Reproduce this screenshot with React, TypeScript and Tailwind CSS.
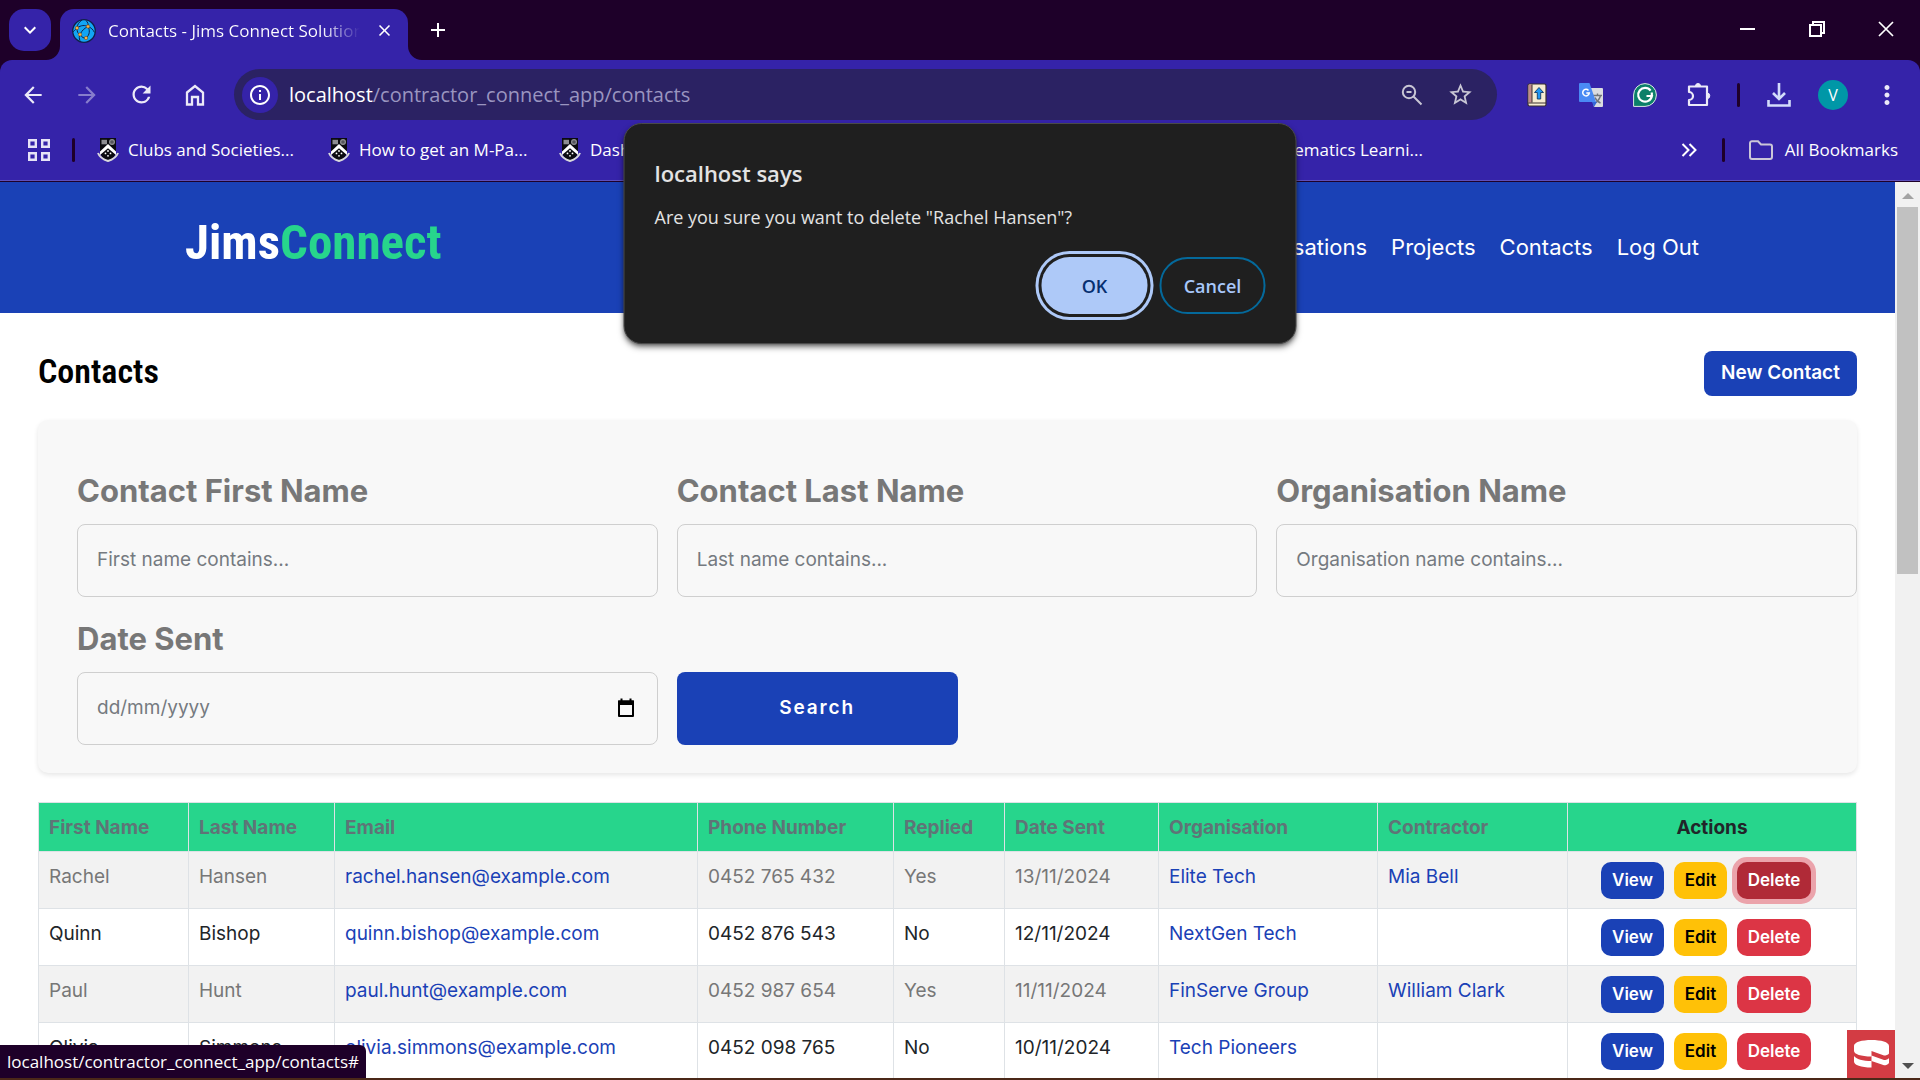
import type { ReactNode } from "react";
import {
  MdAdd,
  MdArrowBack,
  MdArrowForward,
  MdClose,
  MdExpandMore,
  MdInfoOutline,
  MdMoreVert,
  MdRefresh,
  MdStarBorder,
} from "react-icons/md";

type Contact = {
  first: string;
  last: string;
  email: string;
  phone: string;
  replied: string;
  date: string;
  organisation: string;
  contractor: string;
};

const contacts: Contact[] = [
  { first: "Rachel", last: "Hansen", email: "rachel.hansen@example.com", phone: "0452 765 432", replied: "Yes", date: "13/11/2024", organisation: "Elite Tech", contractor: "Mia Bell" },
  { first: "Quinn", last: "Bishop", email: "quinn.bishop@example.com", phone: "0452 876 543", replied: "No", date: "12/11/2024", organisation: "NextGen Tech", contractor: "" },
  { first: "Paul", last: "Hunt", email: "paul.hunt@example.com", phone: "0452 987 654", replied: "Yes", date: "11/11/2024", organisation: "FinServe Group", contractor: "William Clark" },
  { first: "Olivia", last: "Simmons", email: "olivia.simmons@example.com", phone: "0452 098 765", replied: "No", date: "10/11/2024", organisation: "Tech Pioneers", contractor: "" },
];

const columns = [
  { label: "First Name", width: "w-[150px]" },
  { label: "Last Name", width: "w-[146px]" },
  { label: "Email", width: "w-[363px]" },
  { label: "Phone Number", width: "w-[196px]" },
  { label: "Replied", width: "w-[111px]" },
  { label: "Date Sent", width: "w-[154px]" },
  { label: "Organisation", width: "w-[219px]" },
  { label: "Contractor", width: "w-[190px]" },
];

function GlobeIcon() {
  return (
    <svg viewBox="0 0 24 24" className="size-6 shrink-0" fill="none" stroke="#10204a" strokeWidth="1">
      <circle cx="12" cy="12" r="11.3" fill="#12a5f4" strokeWidth="1.3" />
      <path d="M5 9C9 6 13 6 16 7.500c3 1 5 3 6.500 6M5 9c-2 2-3 3-4 4M5 9c0 4 1 6 3 6.500M8 15.500C10 11 13 9 16 7.500M8 15.500c2 3 4 4 6 3.500M14 19c4-3 4-8 2-11.500M10 1c-3 2-5 5-5 8M14 1.500c2 2 2.500 4 2 6M8 15.500c-1 2-1 4 0 6" />
      <g fill="#fbb040" stroke="#5b4220" strokeWidth=".5">
        <circle cx="5" cy="9" r="1.700" />
        <circle cx="16" cy="7.500" r="1.700" />
        <circle cx="8" cy="15.500" r="1.700" />
        <circle cx="14" cy="19" r="1.700" />
      </g>
    </svg>
  );
}

function CrestIcon() {
  return (
    <svg viewBox="0 0 22 24" className="h-6 w-[22px] shrink-0">
      <path d="M3 0h16v13c0 5-4 8-8 10.500C7 21 3 18 3 13z" fill="#0b0b10" />
      <rect x="4.500" y="1.800" width="5.500" height="4.500" fill="#8d8d92" />
      <circle cx="15" cy="4" r="2.400" fill="#55555c" stroke="#8d8d92" strokeWidth="1.200" />
      <path d="M3 13.500 11 6l8 7.500v3.500L11 10.200l-8 6.800z" fill="#fff" />
      <g fill="#fff">
        <circle cx="11" cy="13" r=".9" />
        <circle cx="8.500" cy="15.400" r=".9" />
        <circle cx="13.500" cy="15.400" r=".9" />
        <circle cx="11" cy="17.800" r=".9" />
      </g>
      <path d="M1 15c1.500 4 5 6.500 10 8 5-1.500 8.500-4 10-8" fill="none" stroke="#d8d8dc" strokeWidth="2" />
    </svg>
  );
}

function BookIcon() {
  return (
    <svg viewBox="0 0 20 24" className="h-6 w-5">
      <rect x="1" y="1" width="18" height="22" rx="1.500" fill="#f6ecd2" stroke="#3a3030" strokeWidth="1.200" />
      <rect x="1.600" y="1.600" width="3.400" height="18" fill="#c08a8a" />
      <path d="M5 1.500v18M1.500 20H19" stroke="#3a3030" strokeWidth="1" />
      <path d="M12 4.500 7.500 9.500h2.800v6.500h3.400V9.500h2.800z" fill="#2196f3" stroke="#123a66" strokeWidth=".9" />
    </svg>
  );
}

function TranslateIcon() {
  return (
    <svg viewBox="0 0 24 24" className="size-6">
      <path d="M10 5h13a1 1 0 0 1 1 1v17a1 1 0 0 1-1 1h-8z" fill="#dadce0" />
      <path d="M14 12.500h9M18.500 10.500v2M21.500 12.500c-.8 3.500-3 6-5.500 7.500M16 14.500c1 2.500 3 4.500 5.500 5.500" stroke="#70757a" strokeWidth="1.400" fill="none" />
      <path d="m13 19 5 0-3 5z" fill="#3367d6" />
      <path d="M1 0h9.500L17 19H1a1 1 0 0 1-1-1V1a1 1 0 0 1 1-1z" fill="#4a8af4" />
      <path d="M9.500 7.400A3.300 3.300 0 1 0 10.300 10H7.300" fill="none" stroke="#fff" strokeWidth="1.500" />
    </svg>
  );
}

function GrammarIcon() {
  return (
    <svg viewBox="0 0 24 24" className="size-6">
      <path d="M12 .6a11.400 11.400 0 1 1 0 22.800H.6V12A11.400 11.400 0 0 1 12 .6z" fill="#0b8069" stroke="#dfe8e6" strokeWidth="1" />
      <path d="M17.600 7.600A6.900 6.900 0 1 0 18.900 13h-5.400M18.800 9.500V13" fill="none" stroke="#fff" strokeWidth="2.200" />
    </svg>
  );
}

function PuzzleIcon() {
  return (
    <svg viewBox="0 0 26 26" className="size-[26px]" fill="none" stroke="#eceaf8" strokeWidth="2.200" strokeLinejoin="round">
      <path d="M3 4.500h18v18.500H3v-5a3.800 3.800 0 0 0 0-8z" />
      <path d="M9.500 4a2.500 2.500 0 0 1 5 0zM21 11a2.800 2.800 0 0 1 0 5.600z" fill="#eceaf8" strokeWidth="1" />
    </svg>
  );
}

function CakeLogo() {
  return (
    <svg viewBox="0 0 48 48" className="size-12">
      <rect width="48" height="48" fill="#d33c44" />
      <g fill="#fff">
        <path d="M7 16c0-4 8-6 17.500-6S42 12 42 16v7.500c-1 1.500-3 2-5 2L24.500 21v5.500C14 26.500 7 24 7 21z" />
        <path d="M7 26c2 3 9 5 17.500 5v6.500C14 37.500 7 35 7 31.500z" />
        <path d="M24.500 25.500 37 30c2 0 4-.5 5-2v5c-1 1.500-3 2.300-5 2.300L24.500 31z" />
      </g>
    </svg>
  );
}

function ToolButton({ label, children }: { label: string; children: ReactNode }) {
  return (
    <button aria-label={label} className="flex h-11 w-[54px] shrink-0 items-center justify-center text-[#eceaf8]">
      {children}
    </button>
  );
}

function Divider() {
  return <span className="h-6 w-[3px] shrink-0 rounded-full bg-[#1e0029]" />;
}

function Bookmark({ label }: { label: string }) {
  return (
    <a href="#" className="flex w-[231px] shrink-0 items-center gap-[9px] whitespace-nowrap">
      <CrestIcon />
      {label}
    </a>
  );
}

function TabStrip() {
  return (
    <div className="flex h-[60px] shrink-0 items-start bg-[#1e0029] pt-[9px] text-white">
      <button aria-label="Search tabs" className="ml-[9px] flex size-[42px] items-center justify-center rounded-[15px] bg-[#3523a9]">
        <MdExpandMore className="size-6" />
      </button>
      <div className="relative ml-[9px] flex h-[51px] w-[348px] items-center rounded-t-[14px] bg-[#3523a9] pr-3 pb-2 pl-3">
        <GlobeIcon />
        <span className="ml-3 flex-1 overflow-hidden bg-linear-to-r from-white from-85% to-transparent bg-clip-text pt-[1px] text-[17px] whitespace-nowrap text-transparent">
          Contacts - Jims Connect Solutions
        </span>
        <button aria-label="Close tab" className="ml-3 flex size-6 items-center justify-center">
          <MdClose className="size-[19px]" />
        </button>
        <svg viewBox="0 0 14 14" className="absolute bottom-0 -left-[14px] size-[14px]" fill="#3523a9">
          <path d="M14 0v14H0A14 14 0 0 0 14 0z" />
        </svg>
        <svg viewBox="0 0 14 14" className="absolute -right-[14px] bottom-0 size-[14px]" fill="#3523a9">
          <path d="M0 0v14h14A14 14 0 0 1 0 0z" />
        </svg>
      </div>
      <button aria-label="New tab" className="ml-[9px] flex size-[42px] items-center justify-center">
        <MdAdd className="size-6" />
      </button>
      <div className="ml-auto flex">
        <button aria-label="Minimise" className="flex h-10 w-[69px] items-center justify-center">
          <span className="h-[2px] w-[15px] bg-white" />
        </button>
        <button aria-label="Restore" className="flex h-10 w-[69px] items-center justify-center">
          <svg viewBox="0 0 16 16" className="size-4" fill="none" stroke="#fff" strokeWidth="2">
            <path d="M1 4h11v11H1zM4 4V1h11v11h-3" />
          </svg>
        </button>
        <button aria-label="Close window" className="flex h-10 w-[69px] items-center justify-center">
          <svg viewBox="0 0 16 16" className="size-4" stroke="#fff" strokeWidth="1.700">
            <path d="m1 1 14 14M15 1 1 15" />
          </svg>
        </button>
      </div>
    </div>
  );
}

function Toolbar() {
  return (
    <div className="flex h-[69px] shrink-0 items-center px-[6px]">
      <ToolButton label="Back"><MdArrowBack className="size-[26px]" /></ToolButton>
      <ToolButton label="Forward"><MdArrowForward className="size-[26px] opacity-45" /></ToolButton>
      <ToolButton label="Reload"><MdRefresh className="size-[27px]" /></ToolButton>
      <ToolButton label="Home">
        <svg viewBox="0 0 20 22" className="h-[22px] w-5" fill="none" stroke="currentColor" strokeWidth="2.300">
          <path d="M2 8.500 10 2l8 6.500V20.500h-5V13H7v7.500H2z" />
        </svg>
      </ToolButton>
      <div className="ml-3 flex h-[51px] flex-1 items-center rounded-full bg-[#2b2263] pr-[23px] pl-2 text-xl">
        <button aria-label="View site information" className="flex size-9 shrink-0 items-center justify-center rounded-full bg-[#3523a9] text-white">
          <MdInfoOutline className="size-6" />
        </button>
        <div className="ml-[11px] flex-1 text-[#9a95c0]">
          <span className="text-white">localhost</span>/contractor_connect_app/contacts
        </div>
        <button aria-label="Zoom" className="flex size-7 items-center justify-center text-[#c8c6d4]">
          <svg viewBox="0 0 22 22" className="size-[22px]" fill="none" stroke="currentColor" strokeWidth="2">
            <circle cx="8" cy="8" r="6.200" />
            <path d="m12.500 12.500 8 8M5.500 8h5" />
          </svg>
        </button>
        <button aria-label="Bookmark this tab" className="ml-5 flex size-7 items-center justify-center text-[#c8c6d4]">
          <MdStarBorder className="size-[27px]" />
        </button>
      </div>
      <div className="ml-[13px] flex items-center">
        <ToolButton label="Reader"><BookIcon /></ToolButton>
        <ToolButton label="Translate"><TranslateIcon /></ToolButton>
        <ToolButton label="Writing assistant"><GrammarIcon /></ToolButton>
        <ToolButton label="Extensions"><PuzzleIcon /></ToolButton>
      </div>
      <div className="mr-3 ml-[11px] flex"><Divider /></div>
      <ToolButton label="Downloads">
        <svg viewBox="0 0 24 24" className="size-6" fill="none" stroke="#d3dcfb" strokeWidth="2.600">
          <path d="M12 0v16M6 10l6 6 6-6M1.500 17v5.500h21V17" />
        </svg>
      </ToolButton>
      <ToolButton label="Profile">
        <span className="flex size-[30px] items-center justify-center rounded-full bg-[#0097a7] text-base text-white">V</span>
      </ToolButton>
      <ToolButton label="Menu"><MdMoreVert className="size-[30px]" /></ToolButton>
    </div>
  );
}

function BookmarksBar() {
  return (
    <div className="flex h-[53px] shrink-0 items-start border-b border-[#5d4fbb] pr-[22px] pl-7 text-[17px] text-white">
      <div className="flex h-11 w-full items-center">
        <button aria-label="Apps">
          <svg viewBox="0 0 22 22" className="size-[22px]" fill="none" stroke="#e6e3f6" strokeWidth="2.400">
            <path d="M1.200 1.200h6.600v6.600H1.200zM14.200 1.200h6.600v6.600h-6.600zM1.200 14.200h6.600v6.600H1.200zM14.200 14.200h6.600v6.600h-6.600z" />
          </svg>
        </button>
        <div className="mx-[22px] flex"><Divider /></div>
        <Bookmark label="Clubs and Societies..." />
        <Bookmark label="How to get an M-Pa..." />
        <Bookmark label="Dashboard" />
        <div className="ml-[432px] flex flex-1"><Bookmark label="Mathematics Learni..." /></div>
        <button aria-label="More bookmarks" className="mr-[25px] shrink-0">
          <svg viewBox="0 0 16 14" className="h-[14px] w-4" fill="none" stroke="#fff" strokeWidth="2">
            <path d="m1.500 1 6 6-6 6M8.500 1l6 6-6 6" />
          </svg>
        </button>
        <Divider />
        <button className="ml-6 flex shrink-0 items-center gap-3">
          <svg viewBox="0 0 24 20" className="h-5 w-6" fill="none" stroke="#cbc6d8" strokeWidth="2">
            <path d="M3 1.200h6l3 3.200h9a2 2 0 0 1 2 2V17a2 2 0 0 1-2 2H3a2 2 0 0 1-2-2V3.200a2 2 0 0 1 2-2z" />
          </svg>
          All Bookmarks
        </button>
      </div>
    </div>
  );
}

function ConfirmDialog() {
  return (
    <div
      role="alertdialog"
      aria-labelledby="confirm-title"
      aria-describedby="confirm-text"
      className="absolute top-[123px] left-1/2 z-20 h-[221px] w-[673px] -translate-x-1/2 rounded-[18px] border border-[#4a4a4a] bg-[#1f1f1f] px-[30px] pt-[33px] text-[#e3e3e3] shadow-md shadow-black/50"
    >
      <h2 id="confirm-title" className="text-[22px] leading-8 font-semibold">localhost says</h2>
      <p id="confirm-text" className="mt-[14px] text-lg leading-7">Are you sure you want to delete "Rachel Hansen"?</p>
      <div className="mt-[26px] flex justify-end gap-3 text-lg font-semibold">
        <button className="h-[57px] w-[106px] rounded-[28px] bg-[#aec9f8] text-[#062e6f] ring-3 ring-[#aec9f8] ring-offset-3 ring-offset-[#1f1f1f]">
          OK
        </button>
        <button className="h-[57px] w-[106px] rounded-[28px] border-2 border-[#04699b] text-[#a8c7fa]">Cancel</button>
      </div>
    </div>
  );
}

function SiteHeader() {
  return (
    <header className="flex h-[131px] items-center justify-between bg-[#1a41b6] pr-[196px] pl-[185px] text-white">
      <a href="#" className="pb-[10px] font-['Roboto_Condensed',sans-serif] text-[49px] leading-[56px] font-bold">
        Jims<span className="text-[#27d58c]">Connect</span>
      </a>
      <nav className="flex gap-6 text-[22px]">
        <a href="#">Organisations</a>
        <a href="#">Projects</a>
        <a href="#">Contacts</a>
        <a href="#">Log Out</a>
      </nav>
    </header>
  );
}

function Field({ id, label, placeholder, children }: { id: string; label: string; placeholder: string; children?: ReactNode }) {
  return (
    <div>
      <label htmlFor={id} className="mb-[10px] block text-[31px] leading-[46px] font-bold text-[#777]">{label}</label>
      <div className="relative">
        <input
          id={id}
          type="text"
          placeholder={placeholder}
          className="block h-[73px] w-full rounded-lg border border-[#cfcfcf] bg-transparent px-[19px] pb-[2px] text-[19px] placeholder:text-[#757a80]"
        />
        {children}
      </div>
    </div>
  );
}

function SearchPanel() {
  return (
    <form className="mt-6 grid grid-cols-3 gap-[19px] rounded-[10px] bg-[#f8f8f8] pt-12 pb-7 pl-[39px] shadow-[0_2px_5px_rgba(0,0,0,0.1)]">
      <Field id="first-name" label="Contact First Name" placeholder="First name contains..." />
      <Field id="last-name" label="Contact Last Name" placeholder="Last name contains..." />
      <Field id="organisation" label="Organisation Name" placeholder="Organisation name contains..." />
      <Field id="date-sent" label="Date Sent" placeholder="dd/mm/yyyy">
        <button type="button" aria-label="Open calendar" className="absolute top-[26px] right-[23px]">
          <svg viewBox="0 0 18 20" className="h-5 w-[18px]">
            <path d="M2 3.500h14V18H2z" fill="none" stroke="#000" strokeWidth="2" strokeLinejoin="round" />
            <path d="M1 2.500h16V7H1zM3.500.5h2V3h-2zM12.500.5h2V3h-2z" fill="#000" />
          </svg>
        </button>
      </Field>
      <button type="button" className="h-[73px] w-[281px] self-end rounded-lg bg-[#1a41b6] text-[19px] font-semibold tracking-widest text-white">
        Search
      </button>
    </form>
  );
}

function ContactsTable() {
  return (
    <table className="mt-[29px] w-full table-fixed border-collapse text-[19px] leading-[29px]">
      <thead>
        <tr className="bg-[#27d58c] text-left text-[#5f7477]">
          {columns.map((c) => (
            <th key={c.label} className={`${c.width} border border-[#dee2e6] px-[10px] pt-[10px] pb-[9px] font-bold`}>
              {c.label}
            </th>
          ))}
          <th className="w-[289px] border border-[#dee2e6] px-[10px] pt-[10px] pb-[9px] text-center font-bold text-[#212529]">Actions</th>
        </tr>
      </thead>
      <tbody>
        {contacts.map((c, i) => (
          <tr key={c.email} className="align-top text-[#212529] odd:bg-[#f2f2f2] odd:text-[#777]">
            <td className="border border-[#dee2e6] px-[10px] py-[10px]">{c.first}</td>
            <td className="border border-[#dee2e6] px-[10px] py-[10px]">{c.last}</td>
            <td className="border border-[#dee2e6] px-[10px] py-[10px]"><a href="#" className="text-[#1a41b6]">{c.email}</a></td>
            <td className="border border-[#dee2e6] px-[10px] py-[10px]">{c.phone}</td>
            <td className="border border-[#dee2e6] px-[10px] py-[10px]">{c.replied}</td>
            <td className="border border-[#dee2e6] px-[10px] py-[10px]">{c.date}</td>
            <td className="border border-[#dee2e6] px-[10px] py-[10px]"><a href="#" className="text-[#1a41b6]">{c.organisation}</a></td>
            <td className="border border-[#dee2e6] px-[10px] py-[10px]"><a href="#" className="text-[#1a41b6]">{c.contractor}</a></td>
            <td className="border border-[#dee2e6] pt-[10px] pr-3 pb-[9px]">
              <div className="flex justify-center gap-[10px] text-[17px] font-semibold">
                <a href="#" className="flex h-[37px] w-[63px] items-center justify-center rounded-[10px] bg-[#1a41b6] text-white">View</a>
                <a href="#" className="flex h-[37px] w-[53px] items-center justify-center rounded-[10px] bg-[#ffc107] text-black">Edit</a>
                <a
                  href="#"
                  className={
                    i === 0
                      ? "flex h-[37px] w-[74px] items-center justify-center rounded-[10px] bg-[#b02a37] text-white ring-5 ring-[#eba3ab]"
                      : "flex h-[37px] w-[74px] items-center justify-center rounded-[10px] bg-[#dc3545] text-white"
                  }
                >
                  Delete
                </a>
              </div>
            </td>
          </tr>
        ))}
      </tbody>
    </table>
  );
}

function ScrollBar() {
  return (
    <div className="flex w-[25px] shrink-0 flex-col items-center bg-[#f1f1f1]">
      <svg viewBox="0 0 12 6" className="mt-[11px] mb-2 h-[6px] w-3 shrink-0" fill="#a3a3a3"><path d="m6 0 6 6H0z" /></svg>
      <div className="h-[41%] w-[21px] bg-[#c1c1c1]" />
      <svg viewBox="0 0 12 6" className="mt-auto mb-[9px] h-[6px] w-3 shrink-0" fill="#505050"><path d="m6 6 6-6H0z" /></svg>
    </div>
  );
}

export default function App() {
  return (
    <div className="relative flex h-screen flex-col overflow-hidden bg-[#1e0029] font-['Open_Sans',sans-serif]">
      <TabStrip />
      <div className="flex shrink-0 flex-col rounded-t-[12px] bg-[#3523a9]">
        <Toolbar />
        <div className="-mt-[1px]"><BookmarksBar /></div>
      </div>
      <div className="mt-[1px] flex min-h-0 flex-1 bg-white">
        <div className="relative min-w-0 flex-1 overflow-hidden font-['Inter',sans-serif]">
          <SiteHeader />
          <main className="px-[38px] pt-[38px]">
            <div className="flex items-start justify-between">
              <h1 className="font-['Roboto_Condensed',sans-serif] text-[34px] leading-10 font-semibold text-black">Contacts</h1>
              <a href="#" className="flex h-[45px] w-[153px] items-center justify-center rounded-lg bg-[#1a41b6] text-[19px] font-semibold text-white">
                New Contact
              </a>
            </div>
            <SearchPanel />
            <ContactsTable />
          </main>
          <div className="absolute right-0 bottom-0"><CakeLogo /></div>
          <div className="absolute bottom-0 left-0 rounded-tr-md bg-[#1e0029] px-[7px] py-1 font-['Open_Sans',sans-serif] text-[17px] leading-[25px] text-white">
            localhost/contractor_connect_app/contacts#
          </div>
        </div>
        <ScrollBar />
      </div>
      <footer className="h-[2px] shrink-0 bg-[#4b2818]" />
      <ConfirmDialog />
    </div>
  );
}
